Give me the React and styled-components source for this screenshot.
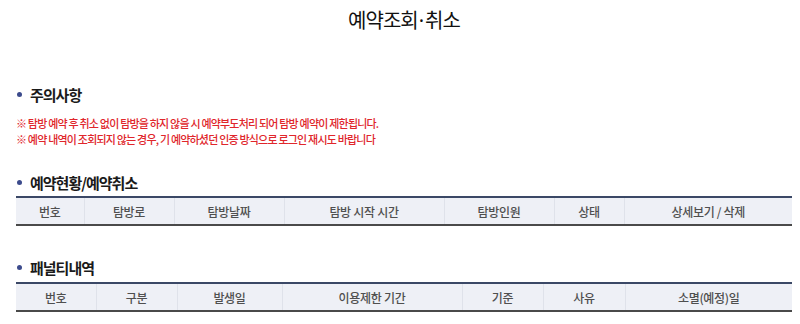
import React from 'react'
import styled, { createGlobalStyle } from 'styled-components'

const GlobalStyle = createGlobalStyle`
  html, body {
    margin: 0;
    padding: 0;
    background: #fff;
  }
  body {
    font-family: "Noto Sans CJK KR", "Noto Sans", sans-serif;
    color: #222;
  }
`

const Page = styled.div`
  width: 800px;
  padding: 0 8px 0 16px;
  box-sizing: border-box;
`

const Title = styled.h1`
  margin: 0;
  padding-top: 6px;
  height: 28px;
  line-height: 28px;
  text-align: center;
  font-size: 20px;
  font-weight: 400;
  letter-spacing: -1px;
  color: #111;
`

const Dot = styled.span`
  font-family: "Noto Sans", sans-serif;
  margin: 0 2px 0 1px;
`

const Heading = styled.h2`
  display: flex;
  align-items: center;
  gap: 8px;
  margin: ${p => p.$top}px 0 0;
  height: 20px;
  font-size: 15px;
  font-weight: 700;
  letter-spacing: -1px;
  color: #1a1a1a;

  &::before {
    content: '';
    width: 5px;
    height: 5px;
    border-radius: 50%;
    background: #3c4b8c;
    margin-left: 1px;
  }
`

const Notices = styled.ul`
  list-style: none;
  margin: 11px 0 0;
  padding: 0;
`

const Notice = styled.li`
  height: 16px;
  line-height: 16px;
  font-size: 11px;
  font-weight: 500;
  letter-spacing: -0.8px;
  color: #e0262b;
`

const Table = styled.table`
  width: 776px;
  margin-top: ${p => p.$top}px;
  border-collapse: collapse;
  table-layout: fixed;
  border-top: 2px solid #3b4866;
  border-bottom: 2px solid #4a4a4a;
`

const Th = styled.th`
  height: 26px;
  padding: 0;
  background: #eef0f6;
  border-left: 1px solid #dfe2ea;
  font-size: 12px;
  font-weight: 500;
  letter-spacing: -0.3px;
  color: #4f4f4f;
  text-align: center;

  &:first-child {
    border-left: none;
  }
`

const reservationCols = [
  ['번호', 68],
  ['탐방로', 90],
  ['탐방날짜', 110],
  ['탐방 시작 시간', 160],
  ['탐방인원', 110],
  ['상태', 70],
  ['상세보기 / 삭제', 168],
]

const penaltyCols = [
  ['번호', 80],
  ['구분', 81],
  ['발생일', 105],
  ['이용제한 기간', 180],
  ['기준', 81],
  ['사유', 82],
  ['소멸(예정)일', 167],
]

const HeaderTable = ({ cols, top }) => (
  <Table $top={top}>
    <colgroup>
      {cols.map(([label, w]) => (
        <col key={label} style={{ width: w }} />
      ))}
    </colgroup>
    <thead>
      <tr>
        {cols.map(([label]) => (
          <Th key={label}>{label}</Th>
        ))}
      </tr>
    </thead>
  </Table>
)

const App = () => {
  return (
    <Page>
      <GlobalStyle />
      <Title>예약조회<Dot>·</Dot>취소</Title>
      <Heading $top={50}>주의사항</Heading>
      <Notices>
        <Notice>※ 탐방 예약 후 취소 없이 탐방을 하지 않을 시 예약부도처리 되어 탐방 예약이 제한됩니다.</Notice>
        <Notice>※ 예약 내역이 조회되지 않는 경우, 기 예약하셨던 인증 방식으로 로그인 재시도 바랍니다</Notice>
      </Notices>
      <Heading $top={25}>예약현황/예약취소</Heading>
      <HeaderTable cols={reservationCols} top={4} />
      <Heading $top={31}>패널티내역</Heading>
      <HeaderTable cols={penaltyCols} top={5} />
    </Page>
  )
}

export default App
